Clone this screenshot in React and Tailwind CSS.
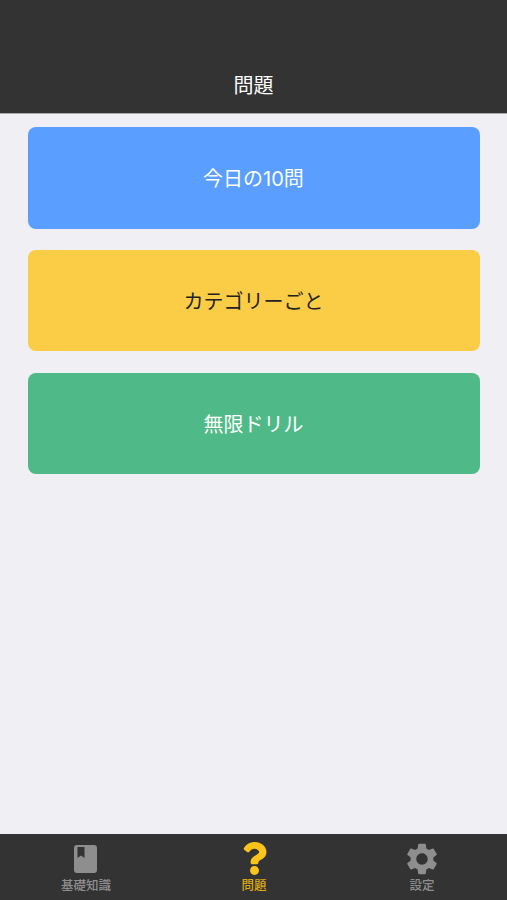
import { FaQuestion } from 'react-icons/fa';
import { MdSettings } from 'react-icons/md';

function BookIcon() {
  return (
    <svg width="23" height="28" viewBox="0 0 23 28" className="-ml-[2px] -mt-[1px]">
      <path
        fillRule="evenodd"
        fill="#8e8e8e"
        d="M3 0H20a3 3 0 0 1 3 3V25a3 3 0 0 1-3 3H3a3 3 0 0 1-3-3V3a3 3 0 0 1 3-3ZM3.5 2V13L7 10.500L10.500 13V2Z"
      />
    </svg>
  );
}

function MenuButton({ label, className }) {
  return (
    <div className={`rounded-lg flex items-center justify-center pt-[2px] pr-[1px] text-[20px] ${className}`}>
      {label}
    </div>
  );
}

function Tab({ icon, label, className }) {
  return (
    <div className={`flex-1 flex flex-col items-center ${className}`}>
      <div className="h-[36px] flex items-center justify-center">{icon}</div>
      <span className="text-[12.500px] leading-[14px] mt-[2px] font-medium">{label}</span>
    </div>
  );
}

export default function App() {
  return (
    <div className="w-[507px] h-[900px] flex flex-col bg-[#efeff4] overflow-hidden font-['Inter','Noto_Sans_CJK_JP',sans-serif]">
      <div className="h-[114px] shrink-0 bg-[#333333] border-b border-[#a8a8a8] flex items-end justify-center pb-[13px]">
        <span className="text-white text-[20px] leading-[28px]">問題</span>
      </div>

      <div className="flex-1 flex flex-col gap-[21px] pl-[28px] pr-[27px] pt-[13px]">
        <MenuButton label="今日の10問" className="h-[102px] bg-[#5a9eff] text-white" />
        <MenuButton label="カテゴリーごと" className="h-[101px] bg-[#fbcd46] text-[#222222]" />
        <MenuButton label="無限ドリル" className="h-[101px] mt-[1px] bg-[#4fba87] text-white" />
      </div>

      <div className="h-[66px] shrink-0 bg-[#333333] flex pl-[2px] pr-[1px] pt-[7px]">
        <Tab icon={<BookIcon />} label="基礎知識" className="text-[#8e8e8e]" />
        <Tab icon={<FaQuestion size={33} className="text-[#fcc419] -mt-[1px]" />} label="問題" className="text-[#dcaa12]" />
        <Tab icon={<MdSettings size={38} className="text-[#8e8e8e]" />} label="設定" className="text-[#8e8e8e]" />
      </div>
    </div>
  );
}
